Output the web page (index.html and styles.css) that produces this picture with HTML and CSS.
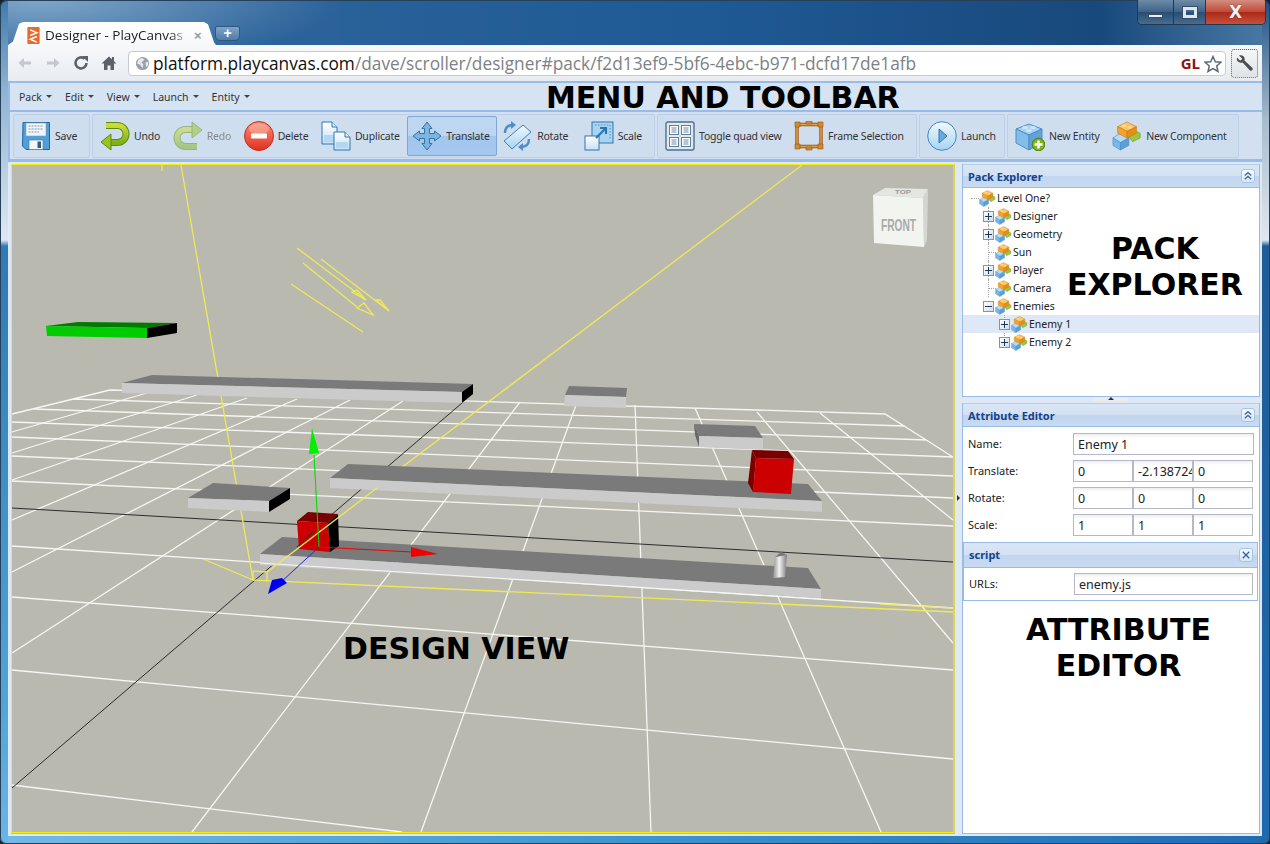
FILE: index.html
```html
<!DOCTYPE html>
<html lang="en">
<head>
<meta charset="utf-8">
<title>Designer - PlayCanvas</title>
<link rel="stylesheet" href="styles.css">
</head>
<body>
<svg class="defs" width="0" height="0" aria-hidden="true">
  <defs>
    <linearGradient id="gBlue" x1="0" y1="0" x2="0" y2="1"><stop offset="0" stop-color="#d6ecfb"/><stop offset="1" stop-color="#6fb2e6"/></linearGradient>
    <linearGradient id="gPage" x1="0" y1="0" x2="0" y2="1"><stop offset="0" stop-color="#ffffff"/><stop offset="1" stop-color="#c5e0f4"/></linearGradient>
    <linearGradient id="gGreen" x1="0" y1="0" x2="0" y2="1"><stop offset="0" stop-color="#c8dd3c"/><stop offset="1" stop-color="#7fb019"/></linearGradient>
    <linearGradient id="gRed" x1="0" y1="0" x2="0" y2="1"><stop offset="0" stop-color="#fb8f78"/><stop offset="1" stop-color="#e0301f"/></linearGradient>
    <linearGradient id="gSky" x1="0" y1="0" x2="0" y2="1"><stop offset="0" stop-color="#f2faff"/><stop offset="1" stop-color="#a5d3f3"/></linearGradient>
    <linearGradient id="gCyl" x1="0" y1="0" x2="1" y2="0"><stop offset="0" stop-color="#8f8f8f"/><stop offset=".45" stop-color="#f1f1f1"/><stop offset="1" stop-color="#7d7d7d"/></linearGradient>

    <symbol id="i-block" viewBox="0 0 32 32">
      <polygon points="30,13 22,9 16,14 22,22 30,18" fill="#9cc63f" stroke="#6d9a25" stroke-width=".7"/>
      <polygon points="9,13 18,18 9,23 1,18" fill="#b5dcf7" stroke="#4f8fc4" stroke-width=".7"/>
      <polygon points="1,18 9,23 9,31 1,26" fill="#78b8e8" stroke="#4f8fc4" stroke-width=".7"/>
      <polygon points="18,18 9,23 9,31 18,26" fill="#5a9fd6" stroke="#4f8fc4" stroke-width=".7"/>
      <polygon points="16,1 26,6 16,11 6,6" fill="#fbc563" stroke="#c97f14" stroke-width=".7"/>
      <polygon points="6,6 16,11 16,18 6,13" fill="#f7a22c" stroke="#c97f14" stroke-width=".7"/>
      <polygon points="26,6 16,11 16,18 26,13" fill="#e98b16" stroke="#c97f14" stroke-width=".7"/>
      <ellipse cx="13" cy="5" rx="2.4" ry="1.3" fill="#fddc98"/>
      <ellipse cx="19" cy="7" rx="2.4" ry="1.3" fill="#fddc98"/>
    </symbol>
    <symbol id="i-chev" viewBox="0 0 13 13">
      <path d="M3 6 6.500 3 10 6M3 10 6.500 7 10 10" fill="none" stroke="#3d6ea5" stroke-width="1.500"/>
    </symbol>
    <symbol id="i-x" viewBox="0 0 13 13">
      <path d="M3 3 10 10M10 3 3 10" fill="none" stroke="#2c5f9f" stroke-width="1.300"/>
    </symbol>
  </defs>
</svg>

<div class="win">
  <header class="tabstrip">
    <div class="tab">
      <svg class="favicon" viewBox="0 0 13 18"><rect width="13" height="18" rx="1" fill="#ea6a2c"/><path d="M3 3 L10 6 L3 9 M10 10 L3 13 L10 16" fill="none" stroke="#fff" stroke-width="1.6"/></svg>
      <span class="tab-title">Designer - PlayCanvas</span>
      <span class="tab-close">×</span>
    </div>
    <div class="newtab">+</div>
    <div class="wincontrols">
      <span class="wc wc-min"><i></i></span>
      <span class="wc wc-max"><i></i></span>
      <span class="wc wc-close">X</span>
    </div>
  </header>

  <nav class="omnibar">
    <svg class="nav-ic ghost" viewBox="0 0 16 16"><path d="M14 6.500H7V3L1.500 8 7 13V9.500H14Z" fill="#c4c8cc"/></svg>
    <svg class="nav-ic ghost" viewBox="0 0 16 16"><path d="M2 6.500H9V3L14.500 8 9 13V9.500H2Z" fill="#c4c8cc"/></svg>
    <svg class="nav-ic" viewBox="0 0 16 16"><path d="M13.500 8A5.500 5.500 0 1 1 11.500 3.700" fill="none" stroke="#5c6268" stroke-width="2.600"/><path d="M9 1H15V7Z" fill="#5c6268"/></svg>
    <svg class="nav-ic" viewBox="0 0 16 16"><path d="M8 1.500 15.500 8.500H13V15H9.500V10.500H6.500V15H3V8.500H.5Z" fill="#5c6268"/><rect x="11" y="2" width="2" height="4" fill="#5c6268"/></svg>
    <div class="omnibox">
      <svg class="globe" viewBox="0 0 16 16"><circle cx="8" cy="8" r="7" fill="#9aa0a8"/><path d="M4 3 8 2 10 4 7 7 9 9 8 13 5 9 2 8Z" fill="#e4e6e9"/><path d="M11 7 14 6 14 10 12 12Z" fill="#e4e6e9"/></svg>
      <span class="url"><b>platform.playcanvas.com</b>/dave/scroller/designer#pack/f2d13ef9-5bf6-4ebc-b971-dcfd17de1afb</span>
      <span class="gl">GL</span>
      <svg class="star" viewBox="0 0 18 18"><path d="M9 1.500 11.300 6.700 17 7.200 12.700 11 14 16.500 9 13.600 4 16.500 5.300 11 1 7.200 6.700 6.700Z" fill="#fff" stroke="#5d6a75" stroke-width="1.500"/></svg>
    </div>
    <div class="wrench">
      <svg viewBox="0 0 20 20"><path d="M4 2.500 7 5.500 6.500 7 5 7.500 2 4.500C1 8 4 10.500 7.500 9.500L15 17.500C16.500 18.500 18.500 16.500 17.500 15L9.500 7.500C10.500 4 7.500 1.500 4 2.500Z" fill="#4c4f52"/></svg>
    </div>
  </nav>

  <main class="app">
    <div class="menubar">
      <span class="menu">Pack</span>
      <span class="menu">Edit</span>
      <span class="menu">View</span>
      <span class="menu">Launch</span>
      <span class="menu">Entity</span>
    </div>

    <div class="toolbar">
      <div class="tgroup g1">
        <div class="tbtn">
          <svg class="ic" viewBox="0 0 30 30"><path d="M2 1.500H28.500V28.500H5L1.500 25Z" fill="#4f9fdb" stroke="#23689f"/><rect x="5" y="2" width="20" height="13" fill="#f2f6fa" stroke="#7b9fc0" stroke-width=".6"/><path d="M7.500 5H22.500M7.500 8H22.500M7.500 11H18" stroke="#8195a8" stroke-width="1" stroke-dasharray="2 1"/><rect x="8" y="19" width="14" height="9.500" fill="#f4f6f8" stroke="#44789f" stroke-width=".6"/><rect x="16.500" y="20.500" width="3.500" height="6.500" fill="#2e5e86"/></svg>
          <span>Save</span>
        </div>
      </div>
      <div class="tgroup g2">
        <div class="tbtn">
          <svg class="ic" viewBox="0 0 30 30"><path d="M6 4.500H17.500A8.500 8.500 0 0 1 17.500 21.500H10" fill="none" stroke="#5f8a0f" stroke-width="7"/><path d="M6 4.500H17.500A8.500 8.500 0 0 1 17.500 21.500H10" fill="none" stroke="url(#gGreen)" stroke-width="5"/><polygon points="1,21 11,13 11,29" fill="#9bc320" stroke="#5f8a0f"/></svg>
          <span>Undo</span>
        </div>
        <div class="tbtn disabled">
          <svg class="ic" viewBox="0 0 30 30"><path d="M24 25.500H12.500A8.500 8.500 0 0 1 12.500 8.500H20" fill="none" stroke="#5f8a0f" stroke-width="7"/><path d="M24 25.500H12.500A8.500 8.500 0 0 1 12.500 8.500H20" fill="none" stroke="url(#gGreen)" stroke-width="5"/><polygon points="29,9 19,1 19,17" fill="#9bc320" stroke="#5f8a0f"/></svg>
          <span>Redo</span>
        </div>
        <div class="tbtn">
          <svg class="ic" viewBox="0 0 30 30"><ellipse cx="15" cy="15" rx="14.500" ry="14.500" fill="url(#gRed)" stroke="#c0301c"/><ellipse cx="15" cy="8" rx="10" ry="5.500" fill="#fff" opacity=".25"/><rect x="7" y="12.500" width="16" height="5" rx="1" fill="#fff"/></svg>
          <span>Delete</span>
        </div>
        <div class="tbtn">
          <svg class="ic" viewBox="0 0 30 30"><path d="M1 1H11L16 6V23H1Z" fill="url(#gPage)" stroke="#2c76b0"/><path d="M11 1V6H16" fill="#dff0fb" stroke="#2c76b0"/><rect x="3" y="14" width="11" height="7" fill="#b3d7f0"/><path d="M13 11H24L29 16V29H13Z" fill="url(#gPage)" stroke="#2c76b0"/><path d="M24 11V16H29" fill="#dff0fb" stroke="#2c76b0"/><rect x="15" y="21" width="12" height="6" fill="#b3d7f0"/></svg>
          <span>Duplicate</span>
        </div>
        <div class="tbtn active">
          <svg class="ic" viewBox="0 0 30 30"><path d="M15 1 20 7.500H17.500V12.500H22.500V10L29 15 22.500 20V17.500H17.500V22.500H20L15 29 10 22.500H12.500V17.500H7.500V20L1 15 7.500 10V12.500H12.500V7.500H10Z" fill="#7ab5e4" stroke="#35749f"/></svg>
          <span>Translate</span>
        </div>
        <div class="tbtn wide-label">
          <svg class="ic" viewBox="0 0 30 30"><polygon points="21,4 29,11 10,28 2,20" fill="url(#gSky)" stroke="#3b80b5"/><path d="M3 12C3 7 6 4 11 4" fill="none" stroke="#4e8fc4" stroke-width="2.400"/><polygon points="9,0 14,4 9,8" fill="#4e8fc4"/><path d="M27 18C27 23 24 26 19 26" fill="none" stroke="#4e8fc4" stroke-width="2.400"/><polygon points="21,22 16,26 21,30" fill="#4e8fc4"/></svg>
          <span>Rotate</span>
        </div>
        <div class="tbtn">
          <svg class="ic" viewBox="0 0 30 30"><rect x="8" y="1" width="21" height="21" fill="#a8d4f2" stroke="#2c76b0"/><path d="M11 4H26V19" fill="none" stroke="#5f8fb4" stroke-dasharray="1.500 1.500"/><rect x="1" y="15" width="14" height="14" fill="url(#gPage)" stroke="#2c76b0"/><path d="M12 17 22 7M16 7H22V13" fill="none" stroke="#2c76b0" stroke-width="2.200"/></svg>
          <span>Scale</span>
        </div>
      </div>
      <div class="tgroup g3">
        <div class="tbtn">
          <svg class="ic" viewBox="0 0 30 30"><rect x="1" y="1" width="28" height="28" rx="2" fill="#dfe9f2" stroke="#50708c" stroke-width="1.400"/><g fill="#fff" stroke="#5f7f9a"><rect x="4.500" y="4.500" width="9" height="9"/><rect x="16.500" y="4.500" width="9" height="9"/><rect x="4.500" y="16.500" width="9" height="9"/><rect x="16.500" y="16.500" width="9" height="9"/></g><path d="M6.500 7H11.500M6.500 9H11.500M6.500 11H11.500M18.500 7H23.500M18.500 9H23.500M18.500 11H23.500M6.500 19H11.500M6.500 21H11.500M6.500 23H11.500M18.500 19H23.500M18.500 21H23.500M18.500 23H23.500" stroke="#6d8aa2"/></svg>
          <span>Toggle quad view</span>
        </div>
        <div class="tbtn">
          <svg class="ic" viewBox="0 0 30 30"><rect x="3" y="3.500" width="24" height="22" fill="none" stroke="#a8651f" stroke-width="3.600"/><rect x="3" y="3.500" width="24" height="22" fill="none" stroke="#e2a452" stroke-width="1.300"/><path d="M1 1H6V6H1ZM24 1H29V6H24ZM1 23H6V28H1ZM24 23H29V28H24ZM12 0H18V3H12ZM12 26H18V29H12Z" fill="#d08a35" stroke="#8d5414" stroke-width=".6"/></svg>
          <span>Frame Selection</span>
        </div>
      </div>
      <div class="tgroup g4">
        <div class="tbtn">
          <svg class="ic" viewBox="0 0 30 30"><circle cx="15" cy="15" r="14.300" fill="url(#gSky)" stroke="#3f88c4"/><polygon points="12,8 20,15 12,22" fill="#6aa9dc" stroke="#2f77b0"/></svg>
          <span>Launch</span>
        </div>
      </div>
      <div class="tgroup g5">
        <div class="tbtn">
          <svg class="ic" viewBox="0 0 30 30"><polygon points="14,3 27,8 14,14 1,8" fill="#a6d2f3" stroke="#4f8fc4"/><polygon points="1,8 14,14 14,29 1,22" fill="#85bdea" stroke="#4f8fc4"/><polygon points="27,8 14,14 14,29 27,22" fill="#62a3d9" stroke="#4f8fc4"/><ellipse cx="10" cy="6.500" rx="3" ry="1.600" fill="#cbe6fa"/><ellipse cx="18" cy="6.500" rx="3" ry="1.600" fill="#cbe6fa"/><ellipse cx="14" cy="9.500" rx="3" ry="1.600" fill="#cbe6fa"/><circle cx="23.500" cy="23.500" r="6.300" fill="#7cb51d" stroke="#4f7e0b"/><path d="M23.500 19.500V27.500M19.500 23.500H27.500" stroke="#fff" stroke-width="2.400"/></svg>
          <span>New Entity</span>
        </div>
        <div class="tbtn">
          <svg class="ic"><use href="#i-block"/></svg>
          <span>New Component</span>
        </div>
      </div>
    </div>

    <div class="main">
      <div class="viewport">
        <svg class="scene" viewBox="11 164 944 670" preserveAspectRatio="none">
          <g class="grid">
            <path d="M110 390 885 414 953 457M110 390 12 414M73 399 905 426M33 409 927 440M12 422 953 457M12 437 953 476M12 456 953 498M12 481 953 526M12 546 953 608M12 597 953 670M12 670 953 759M12 785 402 832"/>
            <path d="M147 393 12 432M197 395 12 453M247 398 12 480M297 399 12 520M350 400 12 572M403 401 12 653M520 402 192 832M576 405 421 832M635 405 651 832M695 408 881 832M757 412 953 643M820 413 953 520"/>
          </g>
          <path class="axis" d="M12 508 953 562M12 788 462 403"/>

          <g class="yline">
            <path d="M181 165 253 580M162 165 162 171M203 559 253 580M253 580 953 612"/>
            <path d="M802 165 393 474M297 248 366 300M303 263 357 307M321 259 389 311M291 284 363 332"/>
            <path d="M352 292 357 290 366 300ZM357 308 364 303 373 315ZM376 300 380 300 389 311Z"/>
          </g>

          <g>
            <polygon class="p-top" points="122,383 152,375 473,384 462,392"/>
            <polygon class="p-front" points="122,383 462,392 462,403 122,393"/>
            <polygon class="p-black" points="462,392 473,384 473,394 462,403"/>

            <polygon class="p-top" points="565,395 569,386 627,388 626,397"/>
            <polygon class="p-front" points="565,395 626,397 626,408 564,406"/>

            <polygon class="p-top" points="694,424 755,426 763,438 699,436"/>
            <polygon class="p-shade" points="694,424 699,436 699,447 695,435"/>
            <polygon class="p-front" points="699,436 763,438 763,450 699,447"/>

            <polygon class="p-top" points="330,478 348,464 808,484 822,501"/>
            <polygon class="p-front" points="330,478 822,501 822,512 330,488"/>

            <polygon class="p-top" points="188,498 213,483 290,488 269,501"/>
            <polygon class="p-front" points="188,498 269,501 269,512 188,508"/>
            <polygon class="p-black" points="269,501 290,488 290,499 269,512"/>

            <polygon class="p-top" points="260,554 282,537 808,568 821,589"/>
            <polygon class="p-front" points="260,554 821,589 821,598 260,565"/>
          </g>
          <path class="grid-over" d="M260 563 821 599"/>

          <polygon fill="#007a00" points="46,326 78,322 177,323 147,328"/>
          <polygon fill="#00cc00" points="46,326 147,328 147,338 47,336"/>
          <polygon fill="#000" points="147,328 177,323 177,333 147,338"/>

          <polygon fill="#7a0000" points="756,458 752,450 788,451 794,459"/>
          <polygon fill="#7a0000" points="756,458 753,492 748,483 752,450"/>
          <polygon fill="#cc0000" points="756,458 794,459 791,494 753,492"/>

          <polygon fill="#7a0000" points="297,521 308,512 338,514 328,523"/>
          <polygon fill="#cc0000" points="297,521 328,523 330,552 299,549"/>
          <polygon fill="#000" points="328,523 338,514 339,546 330,552"/>
          <path class="axis" d="M313 532 297 547"/>

          <g class="yline">
            <path d="M377 488 267 572M253 571 267 572M253 571 253 580M267 572 267 582"/>
          </g>

          <path d="M319 547 314 455" stroke="#00d800" fill="none"/>
          <polygon fill="#00f000" points="312,428 309,454 319,453"/>
          <path d="M319 547 412 552" stroke="#f00000" fill="none"/>
          <polygon fill="#f00000" points="411,547 438,554 411,557"/>
          <path d="M319 547 280 583" stroke="#2222e8" fill="none"/>
          <polygon fill="#0000f0" points="268,594 272,580 282,578 287,583"/>

          <polygon fill="url(#gCyl)" points="775,557 787,555 785,577 773,578"/>
          <polygon fill="#777" points="775,557 781,552 787,555"/>

          <path class="yline-soft" d="M880 604 953 608"/>

          <g class="cube">
            <polygon class="c-top" points="873,195 885,188 928,189 923,198"/>
            <polygon class="c-side" points="923,198 928,189 927,240 924,247"/>
            <polygon class="c-front" points="873,195 923,198 924,247 874,243"/>
            <text class="c-label" x="881" y="231" textLength="35" lengthAdjust="spacingAndGlyphs">FRONT</text>
            <text class="c-toplabel" x="895" y="194" textLength="16" lengthAdjust="spacingAndGlyphs">TOP</text>
          </g>
          <rect class="vframe" x="11.500" y="164.500" width="942.500" height="668" />
        </svg>
      </div>

      <div class="vsplit"><span class="vhandle"></span></div>

      <aside class="side">
        <section class="panel pack">
          <div class="phead"><span>Pack Explorer</span><svg class="pbtn"><use href="#i-chev"/></svg></div>
          <div class="tree">
            <div class="row d0 elbow"><svg class="tic"><use href="#i-block"/></svg><span>Level One?</span></div>
            <div class="row d1 vline"><i class="tog plus"></i><svg class="tic"><use href="#i-block"/></svg><span>Designer</span></div>
            <div class="row d1 vline"><i class="tog plus"></i><svg class="tic"><use href="#i-block"/></svg><span>Geometry</span></div>
            <div class="row d1 vline elbow"><i class="tog none"></i><svg class="tic"><use href="#i-block"/></svg><span>Sun</span></div>
            <div class="row d1 vline"><i class="tog plus"></i><svg class="tic"><use href="#i-block"/></svg><span>Player</span></div>
            <div class="row d1 vline elbow"><i class="tog none"></i><svg class="tic"><use href="#i-block"/></svg><span>Camera</span></div>
            <div class="row d1"><i class="tog minus"></i><svg class="tic"><use href="#i-block"/></svg><span>Enemies</span></div>
            <div class="row d2 sel"><i class="tog plus"></i><svg class="tic"><use href="#i-block"/></svg><span>Enemy 1</span></div>
            <div class="row d2"><i class="tog plus"></i><svg class="tic"><use href="#i-block"/></svg><span>Enemy 2</span></div>
          </div>
        </section>

        <div class="hsplit"><span class="hhandle"></span></div>

        <section class="panel attrs">
          <div class="phead"><span>Attribute Editor</span><svg class="pbtn"><use href="#i-chev"/></svg></div>
          <div class="form">
            <label>Name:</label><div class="field wide">Enemy 1</div>
            <label>Translate:</label><div class="field">0</div><div class="field">-2.138724</div><div class="field">0</div>
            <label>Rotate:</label><div class="field">0</div><div class="field">0</div><div class="field">0</div>
            <label>Scale:</label><div class="field">1</div><div class="field">1</div><div class="field">1</div>
          </div>
          <div class="sub">
            <div class="phead small"><span>script</span><svg class="pbtn"><use href="#i-x"/></svg></div>
            <div class="form urls">
              <label>URLs:</label><div class="field wide">enemy.js</div>
            </div>
          </div>
        </section>
      </aside>
    </div>
  </main>

  <span class="note n-menu">MENU AND TOOLBAR</span>
  <span class="note n-pack">PACK<br>EXPLORER</span>
  <span class="note n-design">DESIGN VIEW</span>
  <span class="note n-attr">ATTRIBUTE<br>EDITOR</span>
</div>
</body>
</html>
```
FILE: styles.css
```css
* { box-sizing: border-box; }
html, body { margin: 0; padding: 0; background: #14202c; }
body { width: 1270px; height: 844px; overflow: hidden; }
.defs { position: absolute; }

.win {
  position: relative;
  width: 1270px;
  height: 844px;
  display: flex;
  flex-direction: column;
  padding: 0 8px 8px;
  border-radius: 7px 7px 6px 6px;
  overflow: hidden;
  background:
    linear-gradient(180deg, #3f79ad 0, #8fb3d0 90px, #dfe8f0 240px, #2c7ab6 246px, #4fa4d8 700px, #69b6e4 844px) 0 0 / 8px 100% no-repeat,
    linear-gradient(180deg, #1c4f84 0, #a8bccd 120px, #dfe8f0 240px, #1d5c98 246px, #1f6aae 844px) 100% 0 / 8px 100% no-repeat,
    linear-gradient(90deg, #74b9e6 0, #3d95cf 50%, #1f6cb3 100%) 0 100% / 100% 9px no-repeat,
    radial-gradient(ellipse 300px 70px at 40px 0, #7fa6c8 0, #2a6299 100%) 0 0 / 340px 50px no-repeat,
    linear-gradient(90deg, #2a6299 300px, #1f5a95 700px, #18497c 1100px, #4a7aa4 1270px) 0 0 / 100% 50px no-repeat;
  box-shadow: inset 0 0 0 1px #27405a;
}

/* browser frame */
.tabstrip { flex: none; height: 45px; display: flex; align-items: flex-end; position: relative; }
.tab {
  flex: none;
  width: 208px;
  height: 23px;
  display: flex;
  align-items: center;
  padding: 3px 0 0 19px;
  background: linear-gradient(180deg, #fff, #f7f8fa);
  clip-path: polygon(0 100%, 5px 85%, 11px 8%, 15px 0, calc(100% - 12px) 0, calc(100% - 8px) 10%, calc(100% - 2px) 88%, 100% 100%);
}
.favicon { width: 13px; height: 17px; flex: none; }
.tab-title {
  margin-left: 5px;
  width: 146px;
  overflow: hidden;
  white-space: nowrap;
  font: 13.5px/20px "Open Sans", sans-serif;
  color: #222;
  -webkit-mask-image: linear-gradient(90deg, #000 85%, transparent 100%);
  mask-image: linear-gradient(90deg, #000 85%, transparent 100%);
}
.tab-close { margin-left: 3px; color: #9a9a9a; font: 700 13px/1 "Liberation Sans", sans-serif; }
.newtab {
  flex: none;
  width: 25px;
  height: 15px;
  margin: 0 0 4px -1px;
  border-radius: 2px 2px 5px 5px;
  background: linear-gradient(180deg, #7ea4c9, #4f7ca8);
  border: 1px solid #30587f;
  color: #fff;
  font: 700 14px/12px "Liberation Sans", sans-serif;
  text-align: center;
}
.wincontrols {
  flex: none;
  margin-left: auto;
  margin-right: -4px;
  align-self: flex-start;
  display: flex;
  height: 25px;
  border: 1px solid #23384f;
  border-top: 0;
  border-radius: 0 0 5px 5px;
  overflow: hidden;
}
.wc { display: flex; align-items: center; justify-content: center; height: 100%; }
.wc-min, .wc-max { background: linear-gradient(180deg, #6e8ba8, #3f6488 48%, #2a4e74 52%, #466c90); border-right: 1px solid #23384f; }
.wc-min { width: 36px; }
.wc-min i { width: 15px; height: 4px; margin-top: 7px; background: #e8eef3; border: 1px solid #3a4f63; }
.wc-max { width: 32px; }
.wc-max i { width: 14px; height: 11px; border: 3px solid #dfe7ee; outline: 1px solid #3a4f63; }
.wc-close {
  width: 59px;
  background: linear-gradient(180deg, #d28f80, #c24a36 48%, #aa2a1a 52%, #c9503a);
  color: #f2f2f2;
  font: 700 17px/1 "DejaVu Sans", sans-serif;
  text-shadow: 0 0 1px #4c1a12;
}

.omnibar {
  flex: none;
  height: 36px;
  display: flex;
  align-items: center;
  padding: 0 4px 0 9px;
  background: linear-gradient(180deg, #f7f8fa, #e8ecf0);
}
.nav-ic { width: 16px; height: 16px; flex: none; margin-right: 12px; }
.omnibox {
  flex: none;
  width: 1098px;
  height: 25px;
  margin: 1px 5px 0 -1px;
  display: flex;
  align-items: center;
  padding: 0 3px 0 6px;
  background: #fff;
  border: 1px solid #c6cbd1;
  border-radius: 4px;
}
.globe { width: 15px; height: 15px; flex: none; }
.url {
  margin-left: 3px;
  padding-top: 1px;
  flex: 1;
  white-space: nowrap;
  font: 17.3px/22px "Open Sans", sans-serif;
  color: #7c8286;
}
.url b { font-weight: 400; color: #111; }
.gl { font: 700 15px/1 "Open Sans", sans-serif; color: #8c1414; margin-right: 4px; }
.star { width: 18px; height: 18px; flex: none; }
.wrench {
  flex: none;
  width: 27px;
  height: 29px;
  display: flex;
  align-items: center;
  justify-content: center;
  border: 1px dotted #666;
  border-radius: 3px;
  background: linear-gradient(180deg, #f5f6f8, #dfe3e7);
}
.wrench svg { width: 20px; height: 20px; }

/* application */
.app {
  flex: 1;
  min-height: 0;
  display: flex;
  flex-direction: column;
  background: #99bbe8;
  font: 11px/14px "Noto Sans", sans-serif;
  color: #222;
  padding-top: 2px;
}
.menubar {
  flex: none;
  height: 27px;
  margin-left: 2px;
  padding-left: 9px;
  display: flex;
  align-items: center;
  font-size: 10.5px;
  background: #d6e3f3;
}
.menu { display: flex; align-items: center; margin-right: 13px; color: #333; }
.menu::after {
  content: "";
  margin-left: 4px;
  border: 3px solid transparent;
  border-top-color: #444;
  border-bottom: 0;
}
.toolbar {
  flex: none;
  height: 47px;
  margin: 2px 0 3px 2px;
  padding: 2px 2px 0 3px;
  display: flex;
  align-items: flex-start;
  gap: 2px;
  font-size: 10.5px;
  letter-spacing: -.2px;
  background: #d3e0f1;
}
.tgroup {
  flex: none;
  height: 44px;
  display: flex;
  align-items: center;
  padding: 0 2px;
  background: #cfdeef;
  border: 1px solid #bcd0e8;
  border-radius: 2px;
}
.g1 { width: 77px; }
.g2 { width: 563px; }
.g3 { width: 260px; }
.g4 { width: 86px; }
.g5 { width: 232px; }
.tbtn {
  flex: none;
  height: 40px;
  display: flex;
  align-items: center;
  gap: 4px;
  padding: 0 6.5px 0 4px;
  color: #333;
  border: 1px solid transparent;
  border-radius: 2px;
}
.tbtn.wide-label span { min-width: 34px; margin-left: 1px; }
.tbtn.disabled { opacity: .5; }
.tbtn.active {
  background: linear-gradient(180deg, #c0d7f0 0, #bcd5f0 50%, #a2c6ee 50%, #a4c8f0 100%);
  border-color: #7ea6d6;
}
.ic { width: 30px; height: 30px; flex: none; display: block; }

.main {
  flex: 1;
  min-height: 0;
  display: flex;
  background: #dfe8f6;
  padding: 2px 2px 2px 3px;
}
.viewport { flex: none; width: 944px; height: 100%; }
.scene { display: block; width: 100%; height: 100%; background: #b9b9b0; }
.grid path, .grid-over { fill: none; stroke: #f6f6f2; stroke-width: 1.3; }
.grid-over { stroke-width: 1.1; }
.axis { fill: none; stroke: #2c2c2c; stroke-width: 1; }
.yline path { fill: none; stroke: #eeea55; stroke-width: 1.3; }
.yline-soft { fill: none; stroke: #eee97a; stroke-width: 1.4; }
.p-top { fill: #7a7a7a; }
.p-front { fill: #cbcbcb; }
.p-black { fill: #000; }
.p-shade { fill: #686868; }
.c-top { fill: #e4e6e0; }
.c-side { fill: #d4d6d0; }
.c-front { fill: #f2f4f0; }
.c-label { font: 700 17px "Liberation Sans Narrow", "Liberation Sans", sans-serif; fill: #a9aba8; }
.c-toplabel { font: 700 6px "Liberation Sans", sans-serif; fill: #9a9c98; }
.vframe { fill: none; stroke: #f6f000; stroke-width: 1; }

.vsplit { flex: none; width: 7px; display: flex; align-items: center; }
.vhandle {
  width: 5px;
  height: 34px;
  margin: -3px 0 0 2px;
  background: #e8e8e8;
  border-radius: 0 3px 3px 0;
  position: relative;
}
.vhandle::after {
  content: "";
  position: absolute;
  left: 0;
  top: 14px;
  border: 3px solid transparent;
  border-left-color: #333;
  border-right: 0;
}

.side { flex: none; width: 298px; height: 100%; display: flex; flex-direction: column; background: #dfe8f6; }
.panel { background: #fff; border-left: 1px solid #99bbe8; border-right: 1px solid #99bbe8; }
.pack { flex: none; height: 233px; border-bottom: 1px solid #99bbe8; }
.attrs { flex: 1; min-height: 0; border-bottom: 1px solid #99bbe8; }
.phead {
  height: 24px;
  display: flex;
  align-items: center;
  justify-content: space-between;
  padding: 0 4px 0 5px;
  color: #15428b;
  font-weight: 700;
  background: linear-gradient(180deg, #dae6f5 0, #d3e1f3 48%, #c0d5ef 50%, #c9dbf2 100%);
  border-top: 1px solid #b6cdea;
  border-bottom: 1px solid #99bbe8;
}
.phead span { padding-top: 2px; }
.phead.small { height: 25px; }
.phead.small span { padding-top: 0; }
.pbtn {
  flex: none;
  width: 14px;
  height: 14px;
  background: linear-gradient(180deg, #f6faff, #d8e6f6);
  border: 1px solid #a9c4e4;
  border-radius: 3px;
}

.tree { padding-top: 1px; font-size: 10.5px; }
.row {
  position: relative;
  height: 18px;
  display: flex;
  align-items: center;
  white-space: nowrap;
  color: #222;
}
.d0 { padding-left: 16px; }
.d1 { padding-left: 20px; }
.d2 { padding-left: 36px; }
.sel { background: #dfe8f6; }
.tic { width: 17px; height: 17px; flex: none; }
.row span { margin-left: 1px; }
.tog {
  flex: none;
  width: 11px;
  height: 11px;
  margin-right: 1px;
  position: relative;
  background: linear-gradient(135deg, #fff, #cfdbe8);
  border: 1px solid #7f97ad;
}
.tog.none { background: none; border-color: transparent; }
.tog.plus::before, .tog.minus::before {
  content: "";
  position: absolute;
  left: 1px;
  top: 4px;
  width: 7px;
  height: 1px;
  background: #1b3a5a;
}
.tog.plus::after {
  content: "";
  position: absolute;
  left: 4px;
  top: 1px;
  width: 1px;
  height: 7px;
  background: #1b3a5a;
}
.vline::before {
  content: "";
  position: absolute;
  left: 25px;
  top: 0;
  bottom: 0;
  border-left: 1px dotted #a8a8a8;
}
.d2::before {
  content: "";
  position: absolute;
  left: 41px;
  top: 0;
  height: 3px;
  border-left: 1px dotted #a8a8a8;
}
.elbow::after {
  content: "";
  position: absolute;
  left: 8px;
  top: 9px;
  width: 8px;
  border-top: 1px dotted #a8a8a8;
}
.d1.elbow::after { left: 25px; width: 8px; }

.hsplit { flex: none; height: 6px; display: flex; justify-content: center; }
.hhandle {
  width: 34px;
  height: 4px;
  background: #ececec;
  border-radius: 3px 3px 0 0;
  position: relative;
}
.hhandle::after {
  content: "";
  position: absolute;
  left: 14px;
  top: 0;
  border: 3px solid transparent;
  border-bottom-color: #333;
  border-top: 0;
}

.form {
  display: grid;
  grid-template-columns: 105px 60px 60px 60px;
  grid-auto-rows: 22px;
  row-gap: 5px;
  padding: 6px 0 6px 5px;
  align-items: center;
}
.form label { color: #222; }
.field {
  height: 22px;
  padding: 0 4px;
  overflow: hidden;
  white-space: nowrap;
  font-size: 12.5px;
  line-height: 21px;
  color: #222;
  background: linear-gradient(180deg, #eee 0, #fff 4px);
  border: 1px solid #b5b8c8;
}
.field.wide { grid-column: span 3; margin-right: -1px; }
.sub { border: 1px solid #99bbe8; margin: 0 1px 0 0; }
.sub .phead { border-top: 0; }
.urls { padding: 5px 0 5px 5px; }
.urls .field.wide { margin-right: 1px; }

/* annotations lying over the screenshot */
.note {
  position: absolute;
  font: 700 30px/36px "DejaVu Sans", sans-serif;
  color: #000;
  white-space: nowrap;
  text-align: center;
}
.n-menu { left: 546px; top: 80px; }
.n-pack { left: 1067px; top: 231px; }
.n-design { left: 343px; top: 631px; }
.n-attr { left: 1026px; top: 612px; }
```
